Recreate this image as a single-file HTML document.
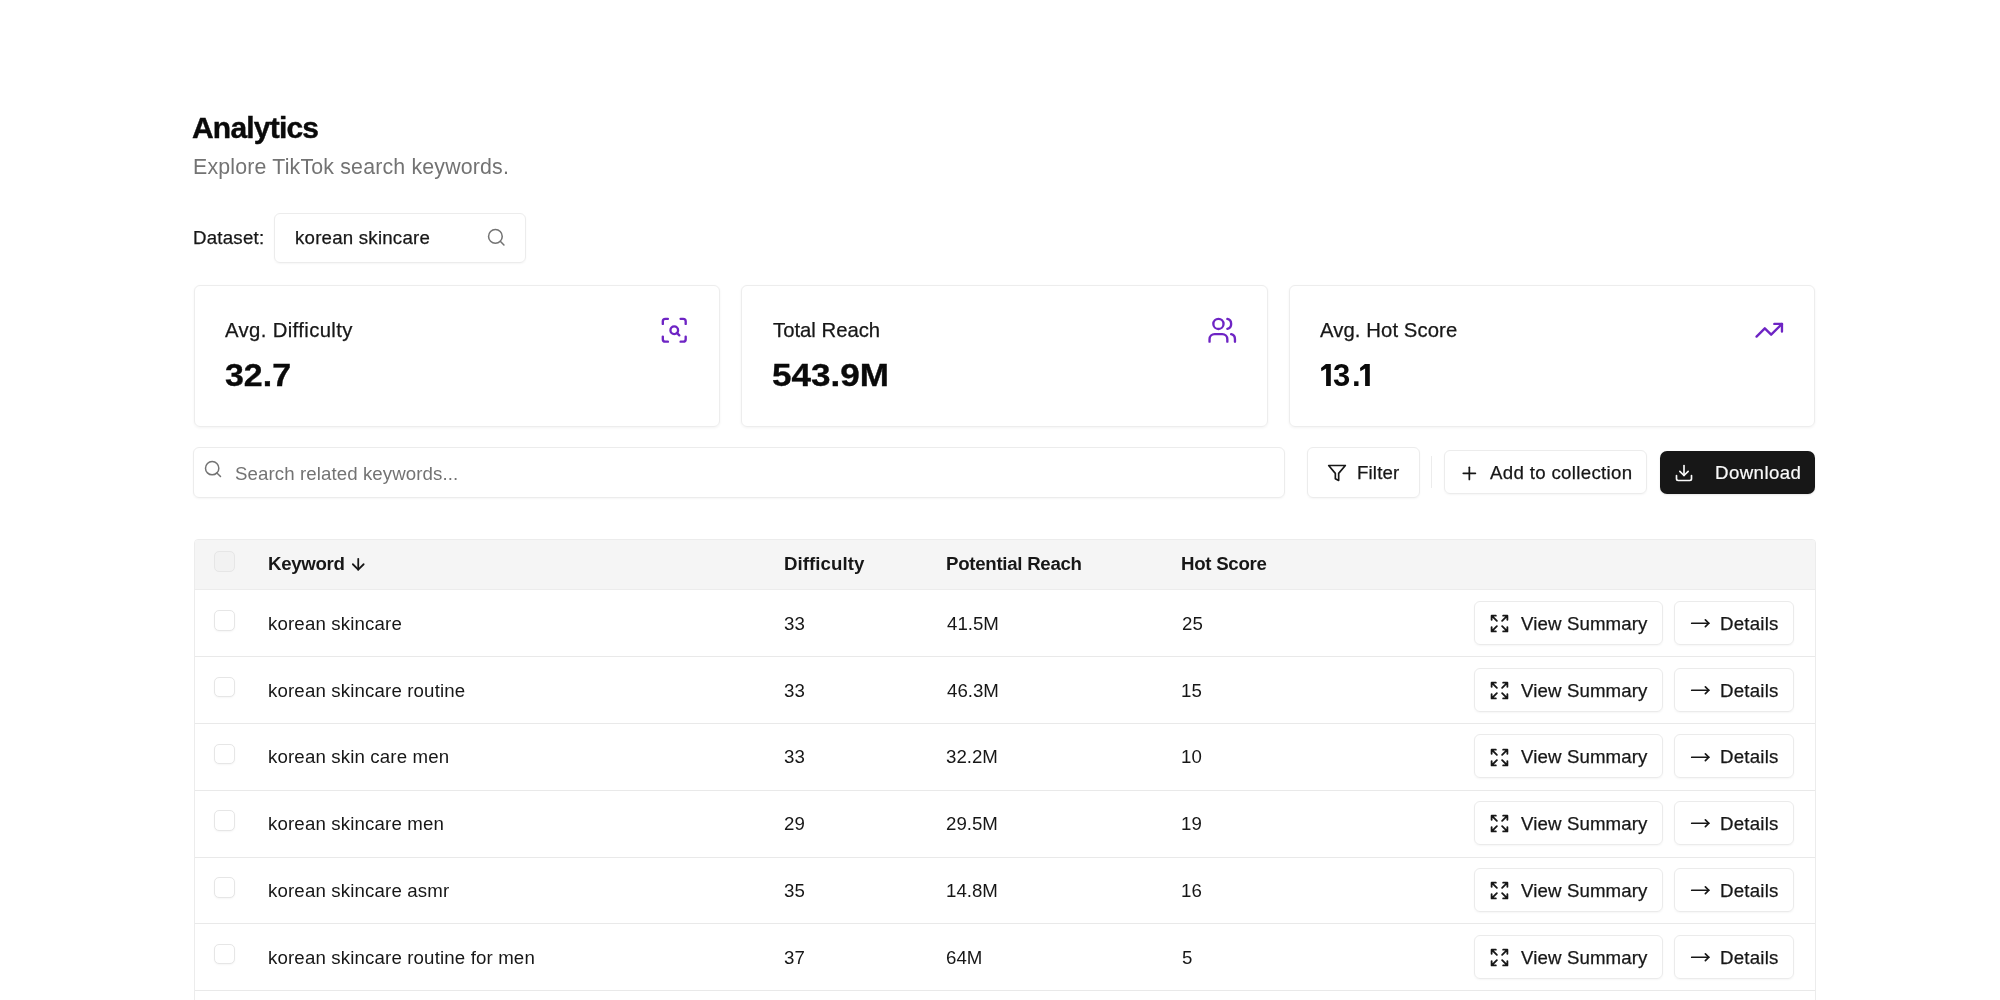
<!DOCTYPE html>
<html><head><meta charset="utf-8"><title>Analytics</title>
<style>
html,body{margin:0;padding:0;background:#fff;}
body{width:2000px;height:1000px;overflow:hidden;position:relative;font-family:"Liberation Sans",sans-serif;}
.t{position:absolute;line-height:1;white-space:nowrap;will-change:transform;}
.b{position:absolute;box-sizing:border-box;}
.i{position:absolute;display:block;overflow:visible;}
</style></head><body>
<div class="t" style="left:191.90px;top:113px;font-size:30px;font-weight:700;color:#0a0a0a;letter-spacing:-0.792px;-webkit-text-stroke:0.4px #0a0a0a;">Analytics</div>
<div class="t" style="left:192.85px;top:157px;font-size:21.33px;color:#737373;letter-spacing:0.176px;">Explore TikTok search keywords.</div>
<div class="t" style="left:192.64px;top:229px;font-size:18.67px;color:#171717;letter-spacing:0.238px;-webkit-text-stroke:0.25px currentColor;">Dataset:</div>
<div class="b" style="left:274.00px;top:213.00px;width:252.00px;height:49.50px;border:1px solid #ececec;border-radius:6px;box-shadow:0 1px 2px rgba(0,0,0,0.04);"></div>
<div class="t" style="left:294.84px;top:229px;font-size:18.67px;color:#171717;letter-spacing:0.223px;-webkit-text-stroke:0.25px currentColor;">korean skincare</div>
<svg class="i" style="left:486.00px;top:227.30px;" width="20.50" height="20.50" viewBox="0 0 24 24" fill="none" stroke="#737373" stroke-width="1.8" stroke-linecap="round" stroke-linejoin="round"><circle cx="11" cy="11" r="8"/><path d="m21 21-4.3-4.3"/></svg>
<div class="b" style="left:193.70px;top:284.50px;width:526.80px;height:142.30px;border:1px solid #ededed;border-radius:6px;box-shadow:0 1px 3px rgba(0,0,0,0.05);"></div>
<div class="t" style="left:225.09px;top:320px;font-size:20.3px;color:#171717;letter-spacing:0.373px;-webkit-text-stroke:0.25px currentColor;">Avg. Difficulty</div>
<div class="t" style="left:224.72px;top:360px;font-size:31px;font-weight:700;color:#0a0a0a;letter-spacing:0.000px;-webkit-text-stroke:0.35px #0a0a0a;transform:scaleX(1.0938);transform-origin:0 0;">32.7</div>
<svg class="i" style="left:658.50px;top:314.60px;" width="30.50" height="30.50" viewBox="0 0 24 24" fill="none" stroke="#6e24c4" stroke-width="1.85" stroke-linecap="round" stroke-linejoin="round"><path d="M3 7V5a2 2 0 0 1 2-2h2"/><path d="M17 3h2a2 2 0 0 1 2 2v2"/><path d="M21 17v2a2 2 0 0 1-2 2h-2"/><path d="M7 21H5a2 2 0 0 1-2-2v-2"/><circle cx="12" cy="12" r="3"/><path d="m16 16-1.9-1.9"/></svg>
<div class="b" style="left:741.40px;top:284.50px;width:526.90px;height:142.30px;border:1px solid #ededed;border-radius:6px;box-shadow:0 1px 3px rgba(0,0,0,0.05);"></div>
<div class="t" style="left:772.70px;top:320px;font-size:20.3px;color:#171717;letter-spacing:0.001px;-webkit-text-stroke:0.25px currentColor;">Total Reach</div>
<div class="t" style="left:772.14px;top:360px;font-size:31px;font-weight:700;color:#0a0a0a;letter-spacing:0.000px;-webkit-text-stroke:0.35px #0a0a0a;transform:scaleX(1.1305);transform-origin:0 0;">543.9M</div>
<svg class="i" style="left:1206.70px;top:314.60px;" width="30.50" height="30.50" viewBox="0 0 24 24" fill="none" stroke="#6e24c4" stroke-width="1.85" stroke-linecap="round" stroke-linejoin="round"><path d="M16 21v-2a4 4 0 0 0-4-4H6a4 4 0 0 0-4 4v2"/><circle cx="9" cy="7" r="4"/><path d="M22 21v-2a4 4 0 0 0-3-3.87"/><path d="M16 3.13a4 4 0 0 1 0 7.75"/></svg>
<div class="b" style="left:1288.80px;top:284.50px;width:526.70px;height:142.30px;border:1px solid #ededed;border-radius:6px;box-shadow:0 1px 3px rgba(0,0,0,0.05);"></div>
<div class="t" style="left:1320.19px;top:320px;font-size:20.3px;color:#171717;letter-spacing:0.088px;-webkit-text-stroke:0.25px currentColor;">Avg. Hot Score</div>
<svg class="i" style="left:1320.8px;top:364.1px" width="10" height="22" viewBox="0 0 10 22"><path d="M0 3.9 L4.9 0 L9.8 0 L9.8 21.9 L5.1 21.9 L5.1 4.6 L0.4 7.2 Z" fill="#0a0a0a"/></svg>
<svg class="i" style="left:1360.0px;top:364.1px" width="10" height="22" viewBox="0 0 10 22"><path d="M0 3.9 L4.9 0 L9.8 0 L9.8 21.9 L5.1 21.9 L5.1 4.6 L0.4 7.2 Z" fill="#0a0a0a"/></svg>
<div class="t" style="left:1333.27px;top:360px;font-size:31px;font-weight:700;color:#0a0a0a;letter-spacing:0.000px;">3</div>
<div class="t" style="left:1351.97px;top:360px;font-size:31px;font-weight:700;color:#0a0a0a;letter-spacing:0.000px;">.</div>
<svg class="i" style="left:1754.30px;top:314.60px;" width="30.50" height="30.50" viewBox="0 0 24 24" fill="none" stroke="#6e24c4" stroke-width="1.85" stroke-linecap="round" stroke-linejoin="round"><polyline points="22 7 13.5 15.5 8.5 10.5 2 17"/><polyline points="16 7 22 7 22 13"/></svg>
<div class="b" style="left:193.20px;top:447.20px;width:1091.80px;height:50.80px;border:1px solid #ececec;border-radius:6px;box-shadow:0 1px 2px rgba(0,0,0,0.04);"></div>
<svg class="i" style="left:203.10px;top:459.40px;" width="20.00" height="20.00" viewBox="0 0 24 24" fill="none" stroke="#737373" stroke-width="1.8" stroke-linecap="round" stroke-linejoin="round"><circle cx="11" cy="11" r="8"/><path d="m21 21-4.3-4.3"/></svg>
<div class="t" style="left:234.63px;top:465px;font-size:18.67px;color:#737373;letter-spacing:0.091px;">Search related keywords...</div>
<div class="b" style="left:1306.50px;top:447.20px;width:113.80px;height:50.40px;border:1px solid #ececec;border-radius:6px;box-shadow:0 1px 2px rgba(0,0,0,0.04);"></div>
<svg class="i" style="left:1326.80px;top:462.60px;" width="20.00" height="20.00" viewBox="0 0 24 24" fill="none" stroke="#171717" stroke-width="2" stroke-linecap="round" stroke-linejoin="round"><polygon points="22 3 2 3 10 12.46 10 19 14 21 14 12.46 22 3"/></svg>
<div class="t" style="left:1357.34px;top:464px;font-size:18.67px;color:#171717;letter-spacing:0.155px;-webkit-text-stroke:0.25px currentColor;">Filter</div>
<div class="b" style="left:1431.00px;top:456.00px;width:1.30px;height:32.00px;background:#ececec;"></div>
<div class="b" style="left:1443.60px;top:450.35px;width:203.60px;height:43.65px;border:1px solid #ececec;border-radius:6px;box-shadow:0 1px 2px rgba(0,0,0,0.04);"></div>
<svg class="i" style="left:1458.60px;top:462.50px;" width="20.70" height="20.70" viewBox="0 0 24 24" fill="none" stroke="#171717" stroke-width="2" stroke-linecap="round" stroke-linejoin="round"><path d="M5 12h14"/><path d="M12 5v14"/></svg>
<div class="t" style="left:1489.80px;top:464px;font-size:18.67px;color:#171717;letter-spacing:0.329px;-webkit-text-stroke:0.25px currentColor;">Add to collection</div>
<div class="b" style="left:1659.50px;top:451.25px;width:155.50px;height:42.75px;background:#171717;border-radius:7px;box-shadow:0 1px 2px rgba(0,0,0,0.1);"></div>
<svg class="i" style="left:1674.40px;top:462.60px;" width="20.00" height="20.00" viewBox="0 0 24 24" fill="none" stroke="#fafafa" stroke-width="2" stroke-linecap="round" stroke-linejoin="round"><path d="M21 15v4a2 2 0 0 1-2 2H5a2 2 0 0 1-2-2v-4"/><polyline points="7 10 12 15 17 10"/><line x1="12" x2="12" y1="15" y2="3"/></svg>
<div class="t" style="left:1714.55px;top:464px;font-size:18.67px;color:#fafafa;letter-spacing:0.421px;-webkit-text-stroke:0.2px #fafafa;">Download</div>
<div class="b" style="left:193.60px;top:539.10px;width:1622.40px;height:560.90px;border:1px solid #ececec;border-radius:4px;"></div>
<div class="b" style="left:194.60px;top:540.10px;width:1620.40px;height:49.50px;background:#f5f5f5;border-radius:3px 3px 0 0;"></div>
<div class="b" style="left:194.60px;top:589.00px;width:1620.40px;height:1.30px;background:#ececec;"></div>
<div class="b" style="left:213.50px;top:551.00px;width:21.00px;height:21.00px;border:1px solid #e6e6e6;border-radius:5px;background:#f2f2f2;"></div>
<div class="t" style="left:268.33px;top:555px;font-size:18.67px;font-weight:700;color:#171717;letter-spacing:-0.318px;">Keyword</div>
<svg class="i" style="left:348.90px;top:555.00px;" width="18.50" height="18.50" viewBox="0 0 24 24" fill="none" stroke="#171717" stroke-width="2.3" stroke-linecap="round" stroke-linejoin="round"><path d="M12 5v14"/><path d="m19 12-7 7-7-7"/></svg>
<div class="t" style="left:783.63px;top:555px;font-size:18.67px;font-weight:700;color:#171717;letter-spacing:0.072px;">Difficulty</div>
<div class="t" style="left:945.73px;top:555px;font-size:18.67px;font-weight:700;color:#171717;letter-spacing:-0.283px;">Potential Reach</div>
<div class="t" style="left:1181.33px;top:555px;font-size:18.67px;font-weight:700;color:#171717;letter-spacing:-0.282px;">Hot Score</div>
<div class="b" style="left:194.60px;top:656.00px;width:1620.40px;height:1.00px;background:#e9e9e9;"></div>
<div class="b" style="left:214.00px;top:610.10px;width:20.50px;height:20.50px;border:1px solid #e6e6e6;border-radius:5px;background:#fff;box-shadow:0 1px 2px rgba(0,0,0,0.04);"></div>
<div class="t" style="left:268.43px;top:615px;font-size:18.67px;color:#171717;letter-spacing:0.150px;">korean skincare</div>
<div class="t" style="left:784.27px;top:615px;font-size:18.67px;color:#171717;letter-spacing:0.000px;">33</div>
<div class="t" style="left:946.76px;top:615px;font-size:18.67px;color:#171717;letter-spacing:0.000px;">41.5M</div>
<div class="t" style="left:1181.86px;top:615px;font-size:18.67px;color:#171717;letter-spacing:0.000px;">25</div>
<div class="b" style="left:1474.30px;top:600.80px;width:189.00px;height:44.20px;border:1px solid #ebebeb;border-radius:6px;box-shadow:0 1px 2px rgba(0,0,0,0.04);"></div>
<svg class="i" style="left:1489.15px;top:613.05px;" width="21.00" height="21.00" viewBox="0 0 24 24" fill="none" stroke="#171717" stroke-width="2.1" stroke-linecap="round" stroke-linejoin="round"><path d="m21 21-6-6m6 6v-4.8m0 4.8h-4.8"/><path d="M3 16.2V21m0 0h4.8M3 21l6-6"/><path d="M21 7.8V3m0 0h-4.8M21 3l-6 6"/><path d="M3 7.8V3m0 0h4.8M3 3l6 6"/></svg>
<div class="t" style="left:1520.84px;top:615px;font-size:18.67px;color:#171717;letter-spacing:0.119px;-webkit-text-stroke:0.25px currentColor;">View Summary</div>
<div class="b" style="left:1674.20px;top:600.80px;width:119.80px;height:44.20px;border:1px solid #ebebeb;border-radius:6px;box-shadow:0 1px 2px rgba(0,0,0,0.04);"></div>
<svg class="i" style="left:1689.90px;top:613.20px;" width="20.50" height="20.50" viewBox="0 0 24 24" fill="none" stroke="#171717" stroke-width="2" stroke-linecap="round" stroke-linejoin="round"><path d="M18 8L22 12L18 16"/><path d="M2 12H22"/></svg>
<div class="t" style="left:1720.24px;top:615px;font-size:18.67px;color:#171717;letter-spacing:0.226px;-webkit-text-stroke:0.25px currentColor;">Details</div>
<div class="b" style="left:194.60px;top:723.00px;width:1620.40px;height:1.00px;background:#e9e9e9;"></div>
<div class="b" style="left:214.00px;top:676.85px;width:20.50px;height:20.50px;border:1px solid #e6e6e6;border-radius:5px;background:#fff;box-shadow:0 1px 2px rgba(0,0,0,0.04);"></div>
<div class="t" style="left:268.43px;top:682px;font-size:18.67px;color:#171717;letter-spacing:0.147px;">korean skincare routine</div>
<div class="t" style="left:784.27px;top:682px;font-size:18.67px;color:#171717;letter-spacing:0.000px;">33</div>
<div class="t" style="left:946.76px;top:682px;font-size:18.67px;color:#171717;letter-spacing:0.000px;">46.3M</div>
<div class="t" style="left:1181.36px;top:682px;font-size:18.67px;color:#171717;letter-spacing:0.000px;">15</div>
<div class="b" style="left:1474.30px;top:667.55px;width:189.00px;height:44.20px;border:1px solid #ebebeb;border-radius:6px;box-shadow:0 1px 2px rgba(0,0,0,0.04);"></div>
<svg class="i" style="left:1489.15px;top:679.80px;" width="21.00" height="21.00" viewBox="0 0 24 24" fill="none" stroke="#171717" stroke-width="2.1" stroke-linecap="round" stroke-linejoin="round"><path d="m21 21-6-6m6 6v-4.8m0 4.8h-4.8"/><path d="M3 16.2V21m0 0h4.8M3 21l6-6"/><path d="M21 7.8V3m0 0h-4.8M21 3l-6 6"/><path d="M3 7.8V3m0 0h4.8M3 3l6 6"/></svg>
<div class="t" style="left:1520.84px;top:682px;font-size:18.67px;color:#171717;letter-spacing:0.119px;-webkit-text-stroke:0.25px currentColor;">View Summary</div>
<div class="b" style="left:1674.20px;top:667.55px;width:119.80px;height:44.20px;border:1px solid #ebebeb;border-radius:6px;box-shadow:0 1px 2px rgba(0,0,0,0.04);"></div>
<svg class="i" style="left:1689.90px;top:679.95px;" width="20.50" height="20.50" viewBox="0 0 24 24" fill="none" stroke="#171717" stroke-width="2" stroke-linecap="round" stroke-linejoin="round"><path d="M18 8L22 12L18 16"/><path d="M2 12H22"/></svg>
<div class="t" style="left:1720.24px;top:682px;font-size:18.67px;color:#171717;letter-spacing:0.226px;-webkit-text-stroke:0.25px currentColor;">Details</div>
<div class="b" style="left:194.60px;top:790.00px;width:1620.40px;height:1.00px;background:#e9e9e9;"></div>
<div class="b" style="left:214.00px;top:743.60px;width:20.50px;height:20.50px;border:1px solid #e6e6e6;border-radius:5px;background:#fff;box-shadow:0 1px 2px rgba(0,0,0,0.04);"></div>
<div class="t" style="left:268.43px;top:748px;font-size:18.67px;color:#171717;letter-spacing:0.147px;">korean skin care men</div>
<div class="t" style="left:784.27px;top:748px;font-size:18.67px;color:#171717;letter-spacing:0.000px;">33</div>
<div class="t" style="left:946.27px;top:748px;font-size:18.67px;color:#171717;letter-spacing:0.000px;">32.2M</div>
<div class="t" style="left:1181.36px;top:748px;font-size:18.67px;color:#171717;letter-spacing:0.000px;">10</div>
<div class="b" style="left:1474.30px;top:734.30px;width:189.00px;height:44.20px;border:1px solid #ebebeb;border-radius:6px;box-shadow:0 1px 2px rgba(0,0,0,0.04);"></div>
<svg class="i" style="left:1489.15px;top:746.55px;" width="21.00" height="21.00" viewBox="0 0 24 24" fill="none" stroke="#171717" stroke-width="2.1" stroke-linecap="round" stroke-linejoin="round"><path d="m21 21-6-6m6 6v-4.8m0 4.8h-4.8"/><path d="M3 16.2V21m0 0h4.8M3 21l6-6"/><path d="M21 7.8V3m0 0h-4.8M21 3l-6 6"/><path d="M3 7.8V3m0 0h4.8M3 3l6 6"/></svg>
<div class="t" style="left:1520.84px;top:748px;font-size:18.67px;color:#171717;letter-spacing:0.119px;-webkit-text-stroke:0.25px currentColor;">View Summary</div>
<div class="b" style="left:1674.20px;top:734.30px;width:119.80px;height:44.20px;border:1px solid #ebebeb;border-radius:6px;box-shadow:0 1px 2px rgba(0,0,0,0.04);"></div>
<svg class="i" style="left:1689.90px;top:746.70px;" width="20.50" height="20.50" viewBox="0 0 24 24" fill="none" stroke="#171717" stroke-width="2" stroke-linecap="round" stroke-linejoin="round"><path d="M18 8L22 12L18 16"/><path d="M2 12H22"/></svg>
<div class="t" style="left:1720.24px;top:748px;font-size:18.67px;color:#171717;letter-spacing:0.226px;-webkit-text-stroke:0.25px currentColor;">Details</div>
<div class="b" style="left:194.60px;top:857.00px;width:1620.40px;height:1.00px;background:#e9e9e9;"></div>
<div class="b" style="left:214.00px;top:810.35px;width:20.50px;height:20.50px;border:1px solid #e6e6e6;border-radius:5px;background:#fff;box-shadow:0 1px 2px rgba(0,0,0,0.04);"></div>
<div class="t" style="left:268.43px;top:815px;font-size:18.67px;color:#171717;letter-spacing:0.147px;">korean skincare men</div>
<div class="t" style="left:784.26px;top:815px;font-size:18.67px;color:#171717;letter-spacing:0.000px;">29</div>
<div class="t" style="left:946.26px;top:815px;font-size:18.67px;color:#171717;letter-spacing:0.000px;">29.5M</div>
<div class="t" style="left:1181.36px;top:815px;font-size:18.67px;color:#171717;letter-spacing:0.000px;">19</div>
<div class="b" style="left:1474.30px;top:801.05px;width:189.00px;height:44.20px;border:1px solid #ebebeb;border-radius:6px;box-shadow:0 1px 2px rgba(0,0,0,0.04);"></div>
<svg class="i" style="left:1489.15px;top:813.30px;" width="21.00" height="21.00" viewBox="0 0 24 24" fill="none" stroke="#171717" stroke-width="2.1" stroke-linecap="round" stroke-linejoin="round"><path d="m21 21-6-6m6 6v-4.8m0 4.8h-4.8"/><path d="M3 16.2V21m0 0h4.8M3 21l6-6"/><path d="M21 7.8V3m0 0h-4.8M21 3l-6 6"/><path d="M3 7.8V3m0 0h4.8M3 3l6 6"/></svg>
<div class="t" style="left:1520.84px;top:815px;font-size:18.67px;color:#171717;letter-spacing:0.119px;-webkit-text-stroke:0.25px currentColor;">View Summary</div>
<div class="b" style="left:1674.20px;top:801.05px;width:119.80px;height:44.20px;border:1px solid #ebebeb;border-radius:6px;box-shadow:0 1px 2px rgba(0,0,0,0.04);"></div>
<svg class="i" style="left:1689.90px;top:813.45px;" width="20.50" height="20.50" viewBox="0 0 24 24" fill="none" stroke="#171717" stroke-width="2" stroke-linecap="round" stroke-linejoin="round"><path d="M18 8L22 12L18 16"/><path d="M2 12H22"/></svg>
<div class="t" style="left:1720.24px;top:815px;font-size:18.67px;color:#171717;letter-spacing:0.226px;-webkit-text-stroke:0.25px currentColor;">Details</div>
<div class="b" style="left:194.60px;top:923.00px;width:1620.40px;height:1.00px;background:#e9e9e9;"></div>
<div class="b" style="left:214.00px;top:877.10px;width:20.50px;height:20.50px;border:1px solid #e6e6e6;border-radius:5px;background:#fff;box-shadow:0 1px 2px rgba(0,0,0,0.04);"></div>
<div class="t" style="left:268.43px;top:882px;font-size:18.67px;color:#171717;letter-spacing:0.147px;">korean skincare asmr</div>
<div class="t" style="left:784.27px;top:882px;font-size:18.67px;color:#171717;letter-spacing:0.000px;">35</div>
<div class="t" style="left:945.76px;top:882px;font-size:18.67px;color:#171717;letter-spacing:0.000px;">14.8M</div>
<div class="t" style="left:1181.36px;top:882px;font-size:18.67px;color:#171717;letter-spacing:0.000px;">16</div>
<div class="b" style="left:1474.30px;top:867.80px;width:189.00px;height:44.20px;border:1px solid #ebebeb;border-radius:6px;box-shadow:0 1px 2px rgba(0,0,0,0.04);"></div>
<svg class="i" style="left:1489.15px;top:880.05px;" width="21.00" height="21.00" viewBox="0 0 24 24" fill="none" stroke="#171717" stroke-width="2.1" stroke-linecap="round" stroke-linejoin="round"><path d="m21 21-6-6m6 6v-4.8m0 4.8h-4.8"/><path d="M3 16.2V21m0 0h4.8M3 21l6-6"/><path d="M21 7.8V3m0 0h-4.8M21 3l-6 6"/><path d="M3 7.8V3m0 0h4.8M3 3l6 6"/></svg>
<div class="t" style="left:1520.84px;top:882px;font-size:18.67px;color:#171717;letter-spacing:0.119px;-webkit-text-stroke:0.25px currentColor;">View Summary</div>
<div class="b" style="left:1674.20px;top:867.80px;width:119.80px;height:44.20px;border:1px solid #ebebeb;border-radius:6px;box-shadow:0 1px 2px rgba(0,0,0,0.04);"></div>
<svg class="i" style="left:1689.90px;top:880.20px;" width="20.50" height="20.50" viewBox="0 0 24 24" fill="none" stroke="#171717" stroke-width="2" stroke-linecap="round" stroke-linejoin="round"><path d="M18 8L22 12L18 16"/><path d="M2 12H22"/></svg>
<div class="t" style="left:1720.24px;top:882px;font-size:18.67px;color:#171717;letter-spacing:0.226px;-webkit-text-stroke:0.25px currentColor;">Details</div>
<div class="b" style="left:194.60px;top:990.00px;width:1620.40px;height:1.00px;background:#e9e9e9;"></div>
<div class="b" style="left:214.00px;top:943.85px;width:20.50px;height:20.50px;border:1px solid #e6e6e6;border-radius:5px;background:#fff;box-shadow:0 1px 2px rgba(0,0,0,0.04);"></div>
<div class="t" style="left:268.43px;top:949px;font-size:18.67px;color:#171717;letter-spacing:0.147px;">korean skincare routine for men</div>
<div class="t" style="left:784.27px;top:949px;font-size:18.67px;color:#171717;letter-spacing:0.000px;">37</div>
<div class="t" style="left:946.20px;top:949px;font-size:18.67px;color:#171717;letter-spacing:0.000px;">64M</div>
<div class="t" style="left:1181.87px;top:949px;font-size:18.67px;color:#171717;letter-spacing:0.000px;">5</div>
<div class="b" style="left:1474.30px;top:934.55px;width:189.00px;height:44.20px;border:1px solid #ebebeb;border-radius:6px;box-shadow:0 1px 2px rgba(0,0,0,0.04);"></div>
<svg class="i" style="left:1489.15px;top:946.80px;" width="21.00" height="21.00" viewBox="0 0 24 24" fill="none" stroke="#171717" stroke-width="2.1" stroke-linecap="round" stroke-linejoin="round"><path d="m21 21-6-6m6 6v-4.8m0 4.8h-4.8"/><path d="M3 16.2V21m0 0h4.8M3 21l6-6"/><path d="M21 7.8V3m0 0h-4.8M21 3l-6 6"/><path d="M3 7.8V3m0 0h4.8M3 3l6 6"/></svg>
<div class="t" style="left:1520.84px;top:949px;font-size:18.67px;color:#171717;letter-spacing:0.119px;-webkit-text-stroke:0.25px currentColor;">View Summary</div>
<div class="b" style="left:1674.20px;top:934.55px;width:119.80px;height:44.20px;border:1px solid #ebebeb;border-radius:6px;box-shadow:0 1px 2px rgba(0,0,0,0.04);"></div>
<svg class="i" style="left:1689.90px;top:946.95px;" width="20.50" height="20.50" viewBox="0 0 24 24" fill="none" stroke="#171717" stroke-width="2" stroke-linecap="round" stroke-linejoin="round"><path d="M18 8L22 12L18 16"/><path d="M2 12H22"/></svg>
<div class="t" style="left:1720.24px;top:949px;font-size:18.67px;color:#171717;letter-spacing:0.226px;-webkit-text-stroke:0.25px currentColor;">Details</div>
</body></html>
